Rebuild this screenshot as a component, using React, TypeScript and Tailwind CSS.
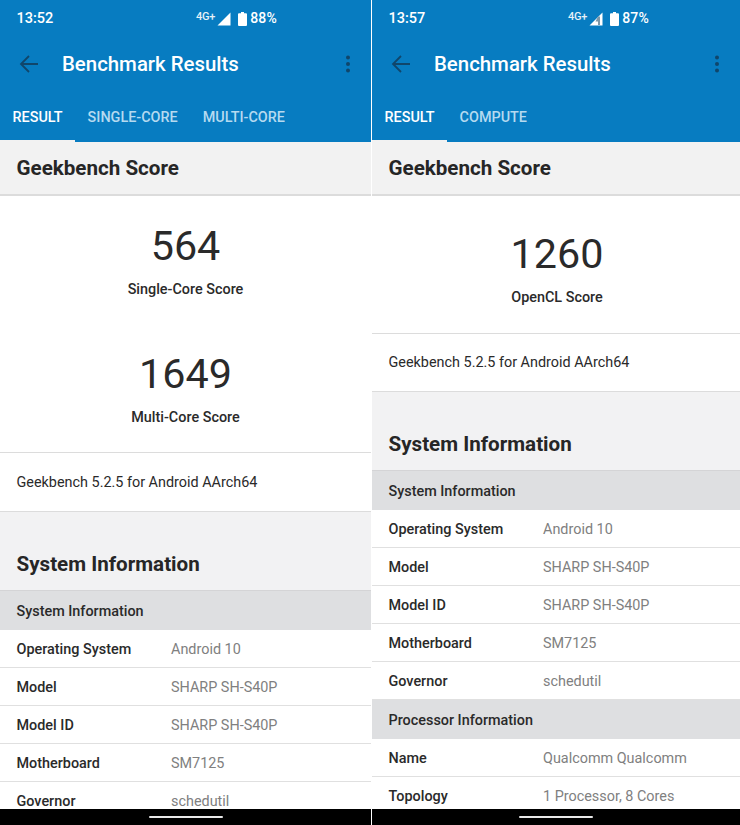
import React from "react";

type Row = { k: string; v: string } | { h: string };

function Signal({ split }: { split?: boolean }) {
  return (
    <svg width="14" height="14" viewBox="0 0 14 14" className="block">
      <path d="M13.5 0.5V13.5H0.5Z" fill="#fff" />
      {split && <path d="M9 4.5 6.5 9.5H9V13H11V4.5Z" fill="#7d97a8" />}
    </svg>
  );
}

function Battery() {
  return (
    <svg width="9" height="14" viewBox="0 0 9 14" className="block">
      <path d="M3 0h3v1.2h2a1 1 0 0 1 1 1V13a1 1 0 0 1-1 1H1a1 1 0 0 1-1-1V2.2a1 1 0 0 1 1-1h2Z" fill="#fff" />
    </svg>
  );
}

function Panel({
  time,
  battery,
  tabs,
  split,
  scores,
  scorePad,
  versionHeight,
  rows,
  width,
}: {
  time: string;
  battery: string;
  tabs: string[];
  split?: boolean;
  scores: { n: string; l: string }[];
  scorePad: string;
  versionHeight: string;
  rows: Row[];
  width: string;
}) {
  return (
    <div className={`flex h-[825px] flex-col overflow-hidden bg-white ${width}`}>
      <div className="flex h-[142px] shrink-0 flex-col bg-[#077cc1]">
        <div className="flex h-[37px] items-center pl-[16.5px] text-[14.5px] font-medium text-white">
          <span className="w-[179.5px]">{time}</span>
          <div className="flex items-center">
            <span className="relative bottom-[1px] mr-[2px] text-[11px] tracking-[-0.2px] text-[#e6f1f8]">4G+</span>
            <Signal split={split} />
            <span className="ml-[7px]"><Battery /></span>
            <span className="ml-[3px] text-[14px] tracking-[0.1px]">{battery}</span>
          </div>
        </div>
        <div className="flex h-[54px] items-center pl-[19px] pr-[20px]">
          <svg width="20" height="20" viewBox="0 0 20 20" fill="none" stroke="#10466b" strokeWidth="1.8" className="shrink-0">
            <path d="M19 10H2M10 2l-8 8 8 8" />
          </svg>
          <span className="ml-[23px] flex-1 text-[20.4px] font-medium text-white">Benchmark Results</span>
          <svg width="6" height="18" viewBox="0 0 6 18" fill="#10466b">
            <circle cx="3" cy="2.5" r="2" />
            <circle cx="3" cy="9" r="2" />
            <circle cx="3" cy="15.5" r="2" />
          </svg>
        </div>
        <div className="flex h-[51px] items-stretch">
          {tabs.map((t, i) => (
            <div
              key={t}
              className={`flex items-center border-b-[2px] px-[12.5px] pt-[5px] text-[14.4px] font-medium ${
                i === 0 ? "border-[#f2f2f2] text-white" : "border-transparent text-[#b5daf0]"
              }`}
            >
              {t}
            </div>
          ))}
        </div>
      </div>
      <div className="min-h-0 flex-1 overflow-hidden">
        <div className="flex h-[54px] items-center border-b-[2px] border-[#dcdcdc] bg-[#f2f2f2] px-[16.5px] pt-[1px] text-[20.6px] font-bold text-[#262626]">
          Geekbench Score
        </div>
        <div className={`flex flex-col items-center ${scorePad}`}>
          {scores.map((s) => (
            <div key={s.l} className="flex h-[128px] flex-col items-center">
              <div className="mt-[21px] text-[41.3px] leading-[58px] text-[#2a2a2a]">{s.n}</div>
              <div className="mt-[5px] text-[14.4px] leading-[20px] font-medium text-[#2a2a2a]">{s.l}</div>
            </div>
          ))}
        </div>
        <div className={`flex items-center border-y border-[#dcdcdc] px-[16.5px] text-[14.4px] text-[#2a2a2a] ${versionHeight}`}>
          Geekbench 5.2.5 for Android AArch64
        </div>
        <div className="flex h-[79px] items-end border-b border-[#d4d4d6] bg-[#f2f2f3] px-[16.5px] pb-[10px] text-[20.6px] font-bold text-[#262626]">
          System Information
        </div>
        {rows.map((r) =>
          "h" in r ? (
            <div key={r.h} className="flex h-[39px] items-center bg-[#dedfe1] px-[16.5px] pt-[2px] text-[14.4px] font-medium text-[#2a2a2a]">
              {r.h}
            </div>
          ) : (
            <div key={r.k} className="flex h-[38px] items-center border-b border-[#e0e0e0] pl-[16.5px] pt-[2px] text-[14.4px]">
              <span className="w-[154.5px] font-medium text-[#2a2a2a]">{r.k}</span>
              <span className="text-[#808080]">{r.v}</span>
            </div>
          )
        )}
      </div>
      <div className="flex h-[16px] shrink-0 items-center justify-center bg-black">
        <div className="h-[2px] w-[74px] rounded-full bg-[#e8e8e8]" />
      </div>
    </div>
  );
}

const sys: Row[] = [
  { h: "System Information" },
  { k: "Operating System", v: "Android 10" },
  { k: "Model", v: "SHARP SH-S40P" },
  { k: "Model ID", v: "SHARP SH-S40P" },
  { k: "Motherboard", v: "SM7125" },
  { k: "Governor", v: "schedutil" },
];

export default function App() {
  return (
    <div className="flex h-[825px] w-[740px] overflow-hidden bg-black font-['Roboto',sans-serif]">
      <Panel
        width="w-[371px]"
        time="13:52"
        battery="88%"
        tabs={["RESULT", "SINGLE-CORE", "MULTI-CORE"]}
        scores={[
          { n: "564", l: "Single-Core Score" },
          { n: "1649", l: "Multi-Core Score" },
        ]}
        scorePad="pt-0"
        versionHeight="h-[60px] pt-[1px]"
        rows={sys}
      />
      <div className="w-[1px] shrink-0 bg-white" />
      <Panel
        width="w-[368px]"
        time="13:57"
        battery="87%"
        split
        tabs={["RESULT", "COMPUTE"]}
        scores={[{ n: "1260", l: "OpenCL Score" }]}
        scorePad="pt-[8px] pb-[1px] pl-[2px]"
        versionHeight="h-[59px]"
        rows={[
          ...sys,
          { h: "Processor Information" },
          { k: "Name", v: "Qualcomm Qualcomm" },
          { k: "Topology", v: "1 Processor, 8 Cores" },
        ]}
      />
    </div>
  );
}
